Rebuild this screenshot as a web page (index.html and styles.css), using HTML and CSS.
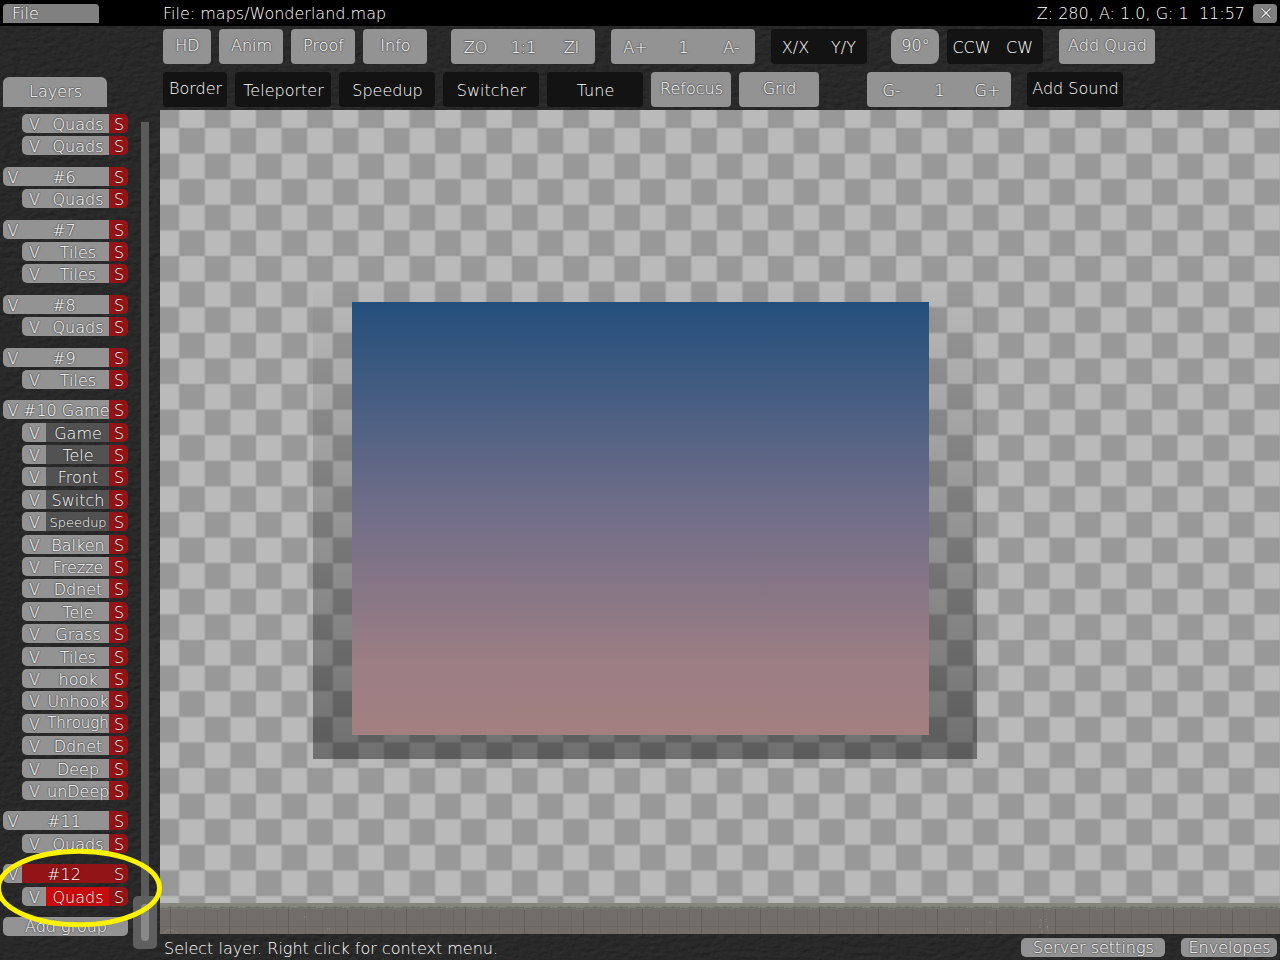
FILE: index.html
```html
<!DOCTYPE html>
<html lang="en">
<head>
<meta charset="utf-8">
<title>Map editor</title>
<link rel="stylesheet" href="styles.css">
</head>
<body>
<svg class="texture" width="100%" height="100%" aria-hidden="true">
  <filter id="plaster" x="0" y="0" width="100%" height="100%" color-interpolation-filters="sRGB">
    <feTurbulence type="fractalNoise" baseFrequency=".12 .2" numOctaves="4" seed="4" result="noise"/>
    <feDiffuseLighting in="noise" surfaceScale=".7" diffuseConstant="1" lighting-color="#353535">
      <feDistantLight azimuth="235" elevation="50"/>
    </feDiffuseLighting>
  </filter>
  <rect width="100%" height="100%" filter="url(#plaster)"/>
</svg>
<div class="editor">
  <header class="menubar">
    <button class="file-menu">File</button>
    <span class="file-name">File: maps/Wonderland.map</span>
    <span class="info">Z: 280, A: 1.0, G: 1&nbsp; 11:57</span>
    <button class="close" aria-label="Close"><svg width="12" height="12" viewBox="0 0 12 12"><path d="M1.5 1.5 10.5 10.5M10.5 1.5 1.5 10.5" stroke="#555" stroke-width="3"/><path d="M1.5 1.5 10.5 10.5M10.5 1.5 1.5 10.5" stroke="#eee" stroke-width="1.3"/></svg></button>
  </header>

  <aside class="sidebar">
    <button class="tab">Layers</button>
    <div class="panel">
      <ul class="layers">
        <li class="layer"><button class="v">V</button><button class="name">Quads</button><button class="s">S</button></li>
        <li class="layer"><button class="v">V</button><button class="name">Quads</button><button class="s">S</button></li>
        <li class="group"><button class="v">V</button><button class="name">#6</button><button class="s">S</button></li>
        <li class="layer"><button class="v">V</button><button class="name">Quads</button><button class="s">S</button></li>
        <li class="group"><button class="v">V</button><button class="name">#7</button><button class="s">S</button></li>
        <li class="layer"><button class="v">V</button><button class="name">Tiles</button><button class="s">S</button></li>
        <li class="layer"><button class="v">V</button><button class="name">Tiles</button><button class="s">S</button></li>
        <li class="group"><button class="v">V</button><button class="name">#8</button><button class="s">S</button></li>
        <li class="layer"><button class="v">V</button><button class="name">Quads</button><button class="s">S</button></li>
        <li class="group"><button class="v">V</button><button class="name">#9</button><button class="s">S</button></li>
        <li class="layer"><button class="v">V</button><button class="name">Tiles</button><button class="s">S</button></li>
        <li class="group"><button class="v">V</button><button class="name wide">#10 Game</button><button class="s">S</button></li>
        <li class="layer special"><button class="v">V</button><button class="name">Game</button><button class="s">S</button></li>
        <li class="layer special"><button class="v">V</button><button class="name">Tele</button><button class="s">S</button></li>
        <li class="layer special"><button class="v">V</button><button class="name">Front</button><button class="s">S</button></li>
        <li class="layer special"><button class="v">V</button><button class="name">Switch</button><button class="s">S</button></li>
        <li class="layer special"><button class="v">V</button><button class="name small">Speedup</button><button class="s">S</button></li>
        <li class="layer"><button class="v">V</button><button class="name">Balken</button><button class="s">S</button></li>
        <li class="layer"><button class="v">V</button><button class="name">Frezze</button><button class="s">S</button></li>
        <li class="layer"><button class="v">V</button><button class="name">Ddnet</button><button class="s">S</button></li>
        <li class="layer"><button class="v">V</button><button class="name">Tele</button><button class="s">S</button></li>
        <li class="layer"><button class="v">V</button><button class="name">Grass</button><button class="s">S</button></li>
        <li class="layer"><button class="v">V</button><button class="name">Tiles</button><button class="s">S</button></li>
        <li class="layer"><button class="v">V</button><button class="name">hook</button><button class="s">S</button></li>
        <li class="layer"><button class="v">V</button><button class="name">Unhook</button><button class="s">S</button></li>
        <li class="layer"><button class="v">V</button><button class="name medium">Through</button><button class="s">S</button></li>
        <li class="layer"><button class="v">V</button><button class="name">Ddnet</button><button class="s">S</button></li>
        <li class="layer"><button class="v">V</button><button class="name">Deep</button><button class="s">S</button></li>
        <li class="layer"><button class="v">V</button><button class="name">unDeep</button><button class="s">S</button></li>
        <li class="group"><button class="v">V</button><button class="name">#11</button><button class="s">S</button></li>
        <li class="layer"><button class="v">V</button><button class="name">Quads</button><button class="s">S</button></li>
        <li class="group selected"><button class="v">V</button><button class="name">#12</button><button class="s">S</button></li>
        <li class="layer selected"><button class="v">V</button><button class="name">Quads</button><button class="s">S</button></li>
        <li class="add"><button class="add-group">Add group</button></li>
      </ul>
      <div class="scrollbar" role="scrollbar" aria-label="Layers" aria-valuenow="100">
        <div class="track"></div>
        <div class="thumb"><div class="grip"></div></div>
      </div>
    </div>
    <svg class="marker" width="166" height="84" viewBox="-4 846 166 84"><ellipse cx="79" cy="888" rx="80.5" ry="36.8" fill="none" stroke="#fff200" stroke-width="5"/></svg>
  </aside>

  <nav class="tools">
    <div class="row">
      <button class="btn narrow">HD</button>
      <button class="btn">Anim</button>
      <button class="btn">Proof</button>
      <button class="btn after-24">Info</button>
      <div class="set after-16"><button>ZO</button><button>1:1</button><button>ZI</button></div>
      <div class="set after-16"><button>A+</button><button>1</button><button>A-</button></div>
      <div class="set off after-24"><button>X/X</button><button>Y/Y</button></div>
      <button class="btn narrow round">90°</button>
      <div class="set off after-16"><button>CCW</button><button>CW</button></div>
      <button class="btn large">Add Quad</button>
    </div>
    <div class="row">
      <button class="btn off">Border</button>
      <div class="set off"><button class="full">Teleporter</button></div>
      <div class="set off"><button class="full">Speedup</button></div>
      <div class="set off"><button class="full">Switcher</button></div>
      <div class="set off"><button class="full">Tune</button></div>
      <button class="btn medium-width">Refocus</button>
      <button class="btn medium-width after-48">Grid</button>
      <div class="set after-16"><button>G-</button><button>1</button><button>G+</button></div>
      <button class="btn large off">Add Sound</button>
    </div>
  </nav>

  <main class="view">
    <svg class="map" width="100%" height="100%">
      <defs>
        <pattern id="checker" width="51.2" height="51.2" patternUnits="userSpaceOnUse" patternTransform="translate(-160 -110)">
          <rect width="51.2" height="51.2" fill="#a7a7a7"/>
          <path d="M.5.5h24.6v24.6H.5zM26.1 26.1h24.6v24.6H26.1z" fill="#989898"/>
          <path d="M26.1.5h24.6v24.6H26.1zM.5 26.1h24.6v24.6H.5z" fill="#bababa"/>
        </pattern>
        <linearGradient id="sky" x1="0" y1="0" x2="0" y2="1">
          <stop offset="0" stop-color="#234f7c"/>
          <stop offset=".5" stop-color="#736f88"/>
          <stop offset=".83" stop-color="#9b7d83"/>
          <stop offset="1" stop-color="#a28080"/>
        </linearGradient>
        <linearGradient id="shade" x1="0" y1="0" x2="0" y2="1">
          <stop offset="0" stop-opacity="0"/>
          <stop offset="1" stop-opacity=".4"/>
        </linearGradient>
        <pattern id="bricks" width="59" height="32" patternUnits="userSpaceOnUse" patternTransform="translate(10 0)">
          <rect width="59" height="32" fill="#726d69"/>
          <path d="M17.500 0v32M34.500 0v32M47.500 0v32M0 23.500h59" stroke="#6c6764"/>
          <path d="M.500 0v32" stroke="#605d5a"/>
        </pattern>
        <pattern id="moss" width="26" height="8" patternUnits="userSpaceOnUse">
          <path d="M0 0h26v5l-3 1-4-1-4 1-5-1-4 2-3-1-3 1z" fill="#85877d"/>
          <path d="M0 6l3-1 3 1 4-2 5 1 4-1 4 1 3-1" fill="none" stroke="#6e7168" stroke-width="1.500"/>
        </pattern>
      </defs>
      <rect width="100%" height="100%" fill="url(#checker)"/>
      <rect x="153" y="170" width="664" height="479" fill="url(#shade)"/>
      <rect x="192" y="192" width="577" height="433" fill="url(#sky)"/>
      <svg y="793" width="100%" height="31">
        <rect width="100%" height="31" fill="url(#bricks)"/>
        <rect width="100%" height="8" fill="url(#moss)"/>
        <path d="M880 16l2 2m4-2v3m-6 3v3m7-1l1 3m-7 1l2 2m5-7l-2 1M805 26h3m22-6l1-2M144 14h4M167 26h4M4 30q6-6 13 0" stroke="#96938f" fill="none" stroke-dasharray="1 1"/>
      </svg>
    </svg>
  </main>

  <footer class="status">
    <span class="hint">Select layer. Right click for context menu.</span>
    <button class="server">Server settings</button>
    <button class="envelopes">Envelopes</button>
  </footer>
</div>
</body>
</html>
```
FILE: styles.css
```css
* { box-sizing: border-box; }

body {
  margin: 0;
  background: #272727;
  color: #fff;
  font: 200 16px/20px "DejaVu Sans Light", "DejaVu Sans", sans-serif;
}

button {
  border: 0;
  padding: 0 0 0 1px;
  margin: 0;
  background: #939393;
  color: inherit;
  font: inherit;
  white-space: nowrap;
  text-shadow: 1px 0 1px #666, -1px 0 1px #666, 0 1px 1px #666, 0 -1px 1px #666;
}

.texture { position: absolute; inset: 0; z-index: -1; }

.editor {
  display: grid;
  grid-template-columns: 160px minmax(0, 1fr);
  grid-template-rows: 26px 84px minmax(0, 1fr) 26px;
  height: 100vh;
  overflow: hidden;
}

/* Top bar */
.menubar {
  grid-column: 1 / -1;
  display: flex;
  align-items: center;
  padding: 0 3px;
  background: #000;
  line-height: 22px;
}

.file-menu {
  width: 96px;
  height: 19px;
  padding-left: 9px;
  border-radius: 4px 4px 0 0;
  background: #808080;
  line-height: 19px;
  text-align: left;
}

.file-name { margin-left: 64px; padding-top: 1px; }
.info { margin-left: auto; padding-top: 1px; white-space: nowrap; }

.close {
  display: flex;
  align-items: center;
  justify-content: center;
  width: 24px;
  height: 19px;
  margin-left: 8px;
  border-radius: 4px;
  background: #808080;
}

/* Layer list */
.sidebar {
  grid-column: 1;
  grid-row: 2 / 5;
  position: relative;
  display: flex;
  flex-direction: column;
  min-height: 0;
  padding: 51px 3px 0;
}

.tab {
  width: 104px;
  height: 30px;
  flex: none;
  border-radius: 6px 6px 0 0;
}

.panel {
  display: flex;
  flex: 1;
  justify-content: space-between;
  min-height: 0;
}

.layers {
  display: flex;
  flex-direction: column;
  justify-content: space-between;
  width: 125px;
  margin: 0;
  padding: 7px 0 24px;
  list-style: none;
}

.layer, .group, .add {
  display: flex;
  height: 19px;
  line-height: 19px;
}

.layer button, .group button { padding-top: 1px; }
.layer { margin-left: 19px; }
.group, .add { margin-top: 8px; }
.v { width: 24px; border-radius: 5px 0 0 5px; }
.group .v { width: 19px; }
.name { flex: 1; min-width: 0; }
.group .name { padding-right: 4px; }
.group .wide { padding-right: 0; }
.small { font-size: 13px; line-height: 17px; }
.medium { font-size: 15px; line-height: 17px; }
.s { width: 19px; border-radius: 0 5px 5px 0; background: #921416; text-shadow: 0 0 2px #400; }
.special .name { background: #525252; text-shadow: 0 0 2px #222; }
.group.selected .name { background: #921416; text-shadow: 0 0 2px #400; }
.layer.selected .name { background: #c90b0d; text-shadow: 0 0 2px #500; }
.add-group { flex: 1; border-radius: 5px; line-height: 17px; }

.scrollbar {
  display: flex;
  flex-direction: column;
  align-items: center;
  width: 24px;
  padding: 15px 0 11px;
}

.track { flex: 1; width: 8px; background: #5a5a5a; }

.thumb {
  width: 24px;
  height: 53px;
  padding: 8px;
  border-radius: 5px;
  background: #5f5f5f;
}

.grip { height: 37px; border-radius: 4px; background: #888; }

.marker { position: absolute; left: -4px; bottom: 30px; }

/* Tool buttons */
.tools {
  display: flex;
  flex-direction: column;
  gap: 8px;
  padding: 3px;
}

.row { display: flex; gap: 8px; }

.btn {
  width: 64px;
  height: 35px;
  padding-bottom: 1px;
  border-radius: 4px;
}

.narrow { width: 48px; }
.medium-width { width: 80px; }
.large { width: 96px; }
.round { border-radius: 8px; }

.set {
  display: flex;
  height: 35px;
  border-radius: 4px;
  background: #939393;
}

.set button { width: 48px; padding-top: 3px; background: none; }
.set .full { width: 96px; }
.btn.off, .set.off { background: #131313; }
.btn.off, .off button { text-shadow: none; }
.after-16 { margin-right: 8px; }
.after-24 { margin-right: 16px; }
.after-48 { margin-right: 40px; }

/* Map view */
.view { grid-column: 2; grid-row: 3; min-height: 0; }
.map { display: block; }

/* Status bar */
.status {
  grid-column: 2;
  grid-row: 4;
  display: flex;
  gap: 16px;
  padding: 4px 3px 3px 4px;
}

.hint { flex: 1; line-height: 22px; }
.server, .envelopes { height: 19px; border-radius: 5px; line-height: 17px; }
.server { width: 144px; }
.envelopes { width: 96px; }
```
